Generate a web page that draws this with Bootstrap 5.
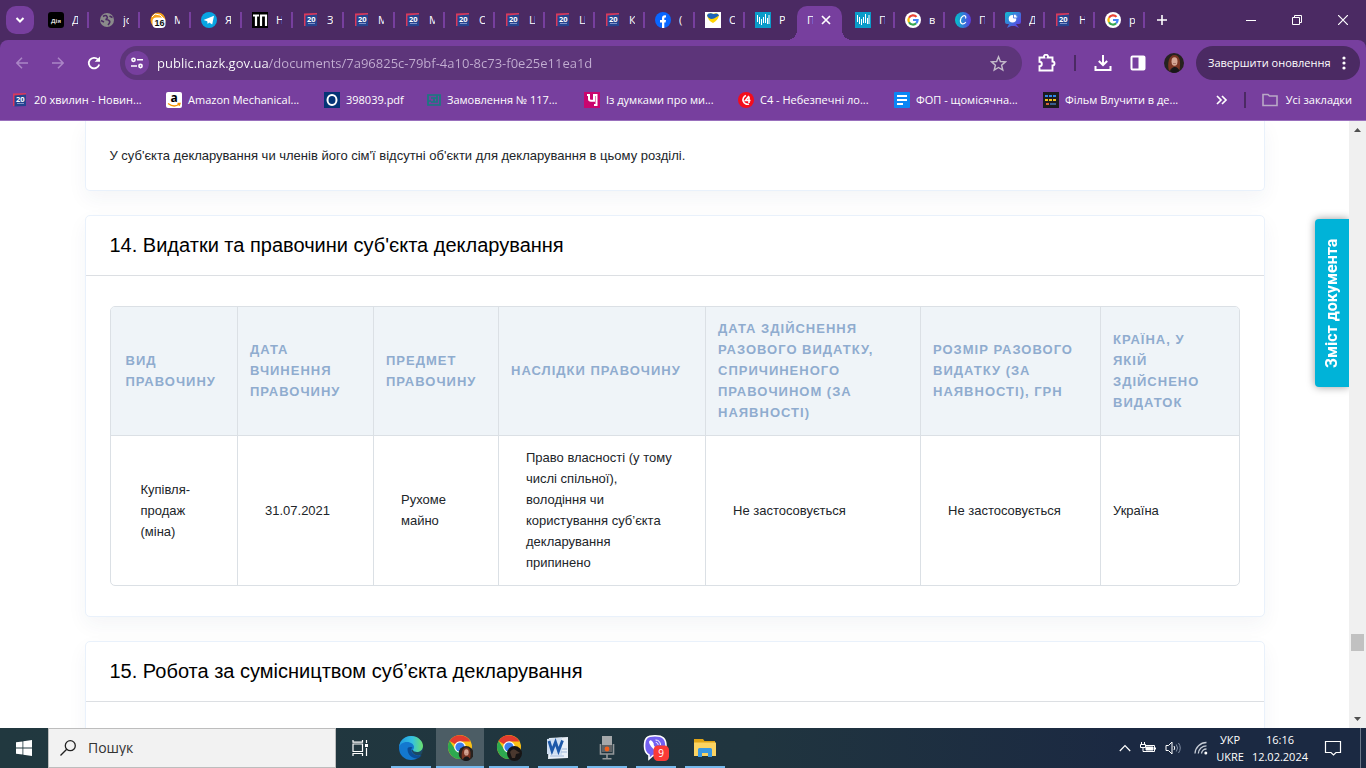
<!DOCTYPE html>
<html lang="uk">
<head>
<meta charset="utf-8">
<meta name="viewport" content="width=device-width, initial-scale=1">
<title>public.nazk.gov.ua</title>
<link rel="stylesheet" href="https://cdn.jsdelivr.net/npm/bootstrap@5.3.0/dist/css/bootstrap.min.css">
<style>
:root{--strip:#4b2a63;--bar:#773f9e;--field:#5d357a;--line:#dbe0e5}
body{font-family:"Liberation Sans",Arial,sans-serif;font-size:13px;line-height:21px;color:#212529}
.chrome-ui,.os-bar{font-family:"Open Sans","Noto Sans",sans-serif;font-size:11px;line-height:16px;color:#fff}
button{border:0;background:none;color:inherit;padding:0;font:inherit}
svg{display:block;flex:none}
/* tab strip */
.tab-strip{background:var(--strip);height:40px}
.tab-search{width:28px;height:28px;margin:0 4px 0 6px;border-radius:10px;background:var(--bar)}
.b-tab{width:50px;height:40px;padding-left:10px;position:relative;color:#fff;text-decoration:none}
.b-tab.wide{width:51px}
.b-tab::after{content:"";width:2px;height:16px;background:var(--bar);position:absolute;right:0;top:12px}
.b-tab.plain::after{display:none}
.b-tab span{width:6px;height:16px;overflow:hidden;white-space:nowrap}
.b-tab.current{padding:6px 3px 0 2px}
.b-tab.current .face{background:var(--bar);height:34px;border-radius:10px 10px 0 0;padding:0 10px 6px;position:relative}
.face::before,.face::after{content:"";position:absolute;bottom:0;width:10px;height:10px}
.face::before{left:-10px;background:radial-gradient(circle at 0 0,transparent 10px,var(--bar) 10px)}
.face::after{right:-10px;background:radial-gradient(circle at 100% 0,transparent 10px,var(--bar) 10px)}
.win-btn{width:46px;height:40px}
/* toolbar */
.tool-wrap{background:var(--strip)}
.tool-area{background:var(--bar);border-radius:8px 8px 0 0;border-bottom:1px solid #9a70bd}
.tool-row{height:46px;padding:0 6px 0 4px}
.tool-row .nav-btn{width:36px;height:34px}
.tool-icons{gap:18px;padding:0 12px 0 16px}
.address{height:34px;border-radius:17px;background:var(--field);padding:0 15px 0 5px;margin-left:8px}
.site-chip{width:24px;height:24px;border-radius:50%;background:var(--bar)}
.address input{border:0;outline:0;padding:0;margin-left:8px;font-size:13px;height:24px;min-width:0;color:transparent;background:linear-gradient(90deg,#fff 112px,#c3aed2 112px);-webkit-background-clip:text;background-clip:text}
.bar-sep{width:2px;height:16px;background:var(--strip)}
.update-btn{height:34px;width:164px;border-radius:17px;background:var(--strip);padding:0 12px}
.marks{height:34px;padding:0 14px 6px 12px}
.marks a{color:#fff;text-decoration:none;white-space:nowrap}
.mark-grid{display:grid;grid-template-columns:154px 158px 103px 157px 154px 156px 149px 1fr}
.mark-grid a{display:flex;align-items:center;gap:6px}
/* document */
.doc-view{overflow:hidden;min-height:0;background:#fff}
.doc-body{max-width:1180px}
.doc-card{border:1px solid #e9f1fb;border-radius:5px;background:#fff;box-shadow:0 8px 20px rgba(40,60,90,.05);margin-bottom:24px}
.doc-card.open-top{border-top:0;border-top-left-radius:0;border-top-right-radius:0}
.doc-card h2{font-size:20px;line-height:24px;color:#000;margin:0;padding:17px 24px 18px;border-bottom:1px solid #dcdfe3;font-weight:400}
.deals-pad{padding:30px 24px}
.deals{border:1px solid var(--line);border-radius:5px;overflow:hidden}
.deals table{table-layout:fixed;width:100%}
.deals th,.deals td{padding:11px 12px 12px;vertical-align:middle;border-left:1px solid var(--line)}
.deals th:first-child,.deals td:first-child{border-left:0;padding-left:15px}
.deals th:last-child{padding-right:24px}
.deals th{background:#eff4f8;color:#8faccf;letter-spacing:1px;text-transform:uppercase;border-bottom:1px solid var(--line)}
.deals td p{margin:0 15px}
.toc-btn{position:absolute;right:0;top:98px;width:34px;height:168px;background:#00b3d8;border-radius:0 4px 4px 0;box-shadow:0 0 8px rgba(0,0,0,.4);color:#fff;font:700 16px/34px Roboto,sans-serif;writing-mode:vertical-rl;transform:rotate(180deg);text-align:center}
.scroll-col{width:17px;background:#f0f0f0}
.scroll-col button{height:17px}
.thumb{height:17px;width:13px;background:#c1c1c1}
/* taskbar */
.os-bar{height:40px;background:linear-gradient(90deg,#21383f,#20353f 55%,#1b2942 82%,#1b2942)}
.os-btn{width:48px;height:40px}
.find-box{width:288px;background:#f2f2f2;border:1px solid #bdbdbd;padding:0 11px}
.find-box input{border:0;outline:0;background:none;font-size:14px;color:#333;padding:0;min-width:0}
.apps{gap:1px;margin-left:3px}
.app-btn{width:48px;height:40px;position:relative}
.app-btn::after{content:"";position:absolute;left:4px;right:4px;bottom:0;height:2px;background:#76b9ed}
.app-btn.active{background:#4c5d65}
.app-btn.active::after{left:0;right:0}
.clock{line-height:17px;text-align:center}
.show-desk{width:6px;height:40px;margin-left:2px;border-left:1px solid #6b7688}
</style>
</head>
<body class="vh-100 d-flex flex-column overflow-hidden">

<svg width="0" height="0" class="position-absolute" aria-hidden="true">
  <symbol id="i20" viewBox="0 0 16 16"><path d="M1 1.500 14 1v3H3v10H1z" fill="#d8395c"/><path d="M2.500 3.500 14 2.500V14l-11.500.500z" fill="#25438f"/><text x="8.300" y="9.500" font-size="7.500" font-weight="700" fill="#fff" text-anchor="middle" font-family="Open Sans">20</text><path d="M5 11.500h7" stroke="#7e93c8"/></symbol>
  <symbol id="inazk" viewBox="0 0 16 16"><path d="M0 0h16v16H0z" fill="#0b9cc9"/><path d="M2.500 3v7M4.500 5v7M6.500 7v6M8.500 5v6M10.500 2v9M12.500 6v6M14 3v9" stroke="#fff"/></symbol>
  <symbol id="igoo" viewBox="0 0 16 16"><circle cx="8" cy="8" r="8" fill="#fff"/><g fill="none" stroke-width="2.200"><path d="M11.500 4.900A4.600 4.600 0 0 0 4 5.700" stroke="#ea4335"/><path d="M4 5.700a4.600 4.600 0 0 0 0 4.600" stroke="#fbbc05"/><path d="M4 10.300a4.600 4.600 0 0 0 7.200.900" stroke="#34a853"/><path d="M11.200 11.200A4.600 4.600 0 0 0 12.600 8H8" stroke="#4285f4"/></g></symbol>
  <symbol id="ichrome" viewBox="0 0 26 26"><circle cx="13" cy="12" r="12" fill="#fbc116"/><path d="M13 12 2.600 6A12 12 0 0 1 23.400 6.500H13z" fill="#e33b2e"/><path d="M2.600 6A12 12 0 0 0 13 24l5-9-5-3-5 2z" fill="#2da94f"/><circle cx="13" cy="12" r="5.800" fill="#fff"/><circle cx="13" cy="12" r="4.600" fill="#3b7ded"/></symbol>
  <symbol id="iface" viewBox="0 0 20 20"><circle cx="10" cy="10" r="10" fill="#26221f"/><path d="M5 18C3 10 5 2 10.500 2S17 9 15.500 17l-3-2H8z" fill="#7a3523"/><ellipse cx="10.500" cy="8.500" rx="3" ry="4.200" fill="#d6a694"/><path d="M7 19c0-4 2-5 4-5s4 2 4 4c-2 2-6 2.500-8 1z" fill="#181719"/><path d="M9 10.500h3" stroke="#8f5549" stroke-width=".6"/></symbol>
</svg>

<header class="chrome-ui flex-shrink-0">
  <div class="tab-strip d-flex align-items-center">
    <button class="tab-search d-flex align-items-center justify-content-center" aria-label="Пошук вкладок"><svg width="10" height="10" viewBox="0 0 10 10"><path d="m1.500 3 3.500 3.500L8.500 3" stroke="#fff" stroke-width="2" fill="none"/></svg></button>
    <nav class="d-flex">
      <a href="#" class="b-tab wide d-flex align-items-center gap-2"><svg width="16" height="16" viewBox="0 0 16 16"><rect width="16" height="16" rx="3"/><text x="8" y="10.500" font-size="6" font-weight="700" fill="#ddd" text-anchor="middle">Дія</text></svg><span>Д</span></a>
      <a href="#" class="b-tab wide d-flex align-items-center gap-2"><svg width="16" height="16" viewBox="0 0 16 16"><circle cx="8" cy="8" r="7" fill="#8b8b8b"/><path d="M4 4.500q3-2 4 0T6.500 7.500q3 0 4 1.500T9 13M10.500 4l3 1.500M2 8.500l3 1.500" stroke="#4b2a63" stroke-width="1.600" fill="none"/></svg><span>jo</span></a>
      <a href="#" class="b-tab wide d-flex align-items-center gap-2"><svg width="16" height="16" viewBox="0 0 16 16"><circle cx="8" cy="8" r="7.500" fill="#f6a21c"/><path d="M2 5 5 2l5 1 4 4" stroke="#fff" fill="none"/><rect x="2.500" y="5.500" width="13" height="10.500" rx="4" fill="#fff"/><text x="9.500" y="14" font-size="9" font-weight="700" fill="#111" text-anchor="middle" font-family="Liberation Sans">16</text></svg><span>М</span></a>
      <a href="#" class="b-tab wide d-flex align-items-center gap-2"><svg width="16" height="16" viewBox="0 0 16 16"><circle cx="8" cy="8" r="8" fill="#08a5e3"/><path d="m2.500 8 10.500-4.200-1.800 8.700-3-2-1.500 1.500-.500-2.800z" fill="#fff"/></svg><span>Я</span></a>
      <a href="#" class="b-tab wide d-flex align-items-center gap-2"><svg width="16" height="16" viewBox="0 0 16 16"><path d="M0 0h16v16H0z"/><path d="M1 3.500h6M4 3v11M9 14V3.500h5V14" stroke="#fff" stroke-width="2.200" fill="none"/></svg><span>Н</span></a>
      <a href="#" class="b-tab wide d-flex align-items-center gap-2"><svg width="16" height="16"><use href="#i20"/></svg><span>З</span></a>
      <a href="#" class="b-tab wide d-flex align-items-center gap-2"><svg width="16" height="16"><use href="#i20"/></svg><span>М</span></a>
      <a href="#" class="b-tab d-flex align-items-center gap-2"><svg width="16" height="16"><use href="#i20"/></svg><span>М</span></a>
      <a href="#" class="b-tab d-flex align-items-center gap-2"><svg width="16" height="16"><use href="#i20"/></svg><span>О</span></a>
      <a href="#" class="b-tab d-flex align-items-center gap-2"><svg width="16" height="16"><use href="#i20"/></svg><span>Ц</span></a>
      <a href="#" class="b-tab d-flex align-items-center gap-2"><svg width="16" height="16"><use href="#i20"/></svg><span>Ц</span></a>
      <a href="#" class="b-tab d-flex align-items-center gap-2"><svg width="16" height="16"><use href="#i20"/></svg><span>К</span></a>
      <a href="#" class="b-tab d-flex align-items-center gap-2"><svg width="16" height="16" viewBox="0 0 16 16"><circle cx="8" cy="8" r="8" fill="#0866ff"/><path d="M7 16v-5.500H5V8h2V6.500C7 4.200 8.300 3 11 3.400v2C9.500 5.300 9.300 5.800 9.300 6.800V8H11l-.400 2.500H9.300V16z" fill="#fff"/></svg><span>(</span></a>
      <a href="#" class="b-tab d-flex align-items-center gap-2"><svg width="16" height="16" viewBox="0 0 16 16"><path d="M0 0h16v16H0z" fill="#fff"/><path d="M2 3q3-3 6-1 4-2 6 1.500-1 4.500-6 7.500-5.500-3-6-8z" fill="#ffd400"/><path d="M2 3.500Q2.500.8 6 1.200 8 2 9 2q4-1.500 5 1.500L9 6.500Q4 8 2 3.500z" fill="#1c62b9"/></svg><span>О</span></a>
      <a href="#" class="b-tab plain d-flex align-items-center gap-2"><svg width="16" height="16"><use href="#inazk"/></svg><span>Р</span></a>
      <div class="b-tab plain current"><div class="face d-flex align-items-center justify-content-between"><span>П</span><button aria-label="Закрити вкладку"><svg width="12" height="12" viewBox="0 0 12 12"><path d="m2 2 8 8m0-8-8 8" stroke="#fff" stroke-width="1.700"/></svg></button></div></div>
      <a href="#" class="b-tab d-flex align-items-center gap-2"><svg width="16" height="16"><use href="#inazk"/></svg><span>П</span></a>
      <a href="#" class="b-tab d-flex align-items-center gap-2"><svg width="16" height="16"><use href="#igoo"/></svg><span>в</span></a>
      <a href="#" class="b-tab d-flex align-items-center gap-2"><svg width="16" height="16" viewBox="0 0 16 16"><linearGradient id="cg"><stop stop-color="#00c4cc"/><stop offset="1" stop-color="#5b3be0"/></linearGradient><circle cx="8" cy="8" r="8" fill="url(#cg)"/><path d="M10.500 6.500c1-2-.500-3.500-2.500-2.500-3 1.500-3.500 7-1 7.800 1.500.400 3-.600 3.800-1.800" stroke="#fff" stroke-width="1.200" fill="none"/></svg><span>П</span></a>
      <a href="#" class="b-tab d-flex align-items-center gap-2"><svg width="16" height="16" viewBox="0 0 16 16"><linearGradient id="pg" x2="1" y2="1"><stop stop-color="#10bfd0"/><stop offset="1" stop-color="#6a2ee8"/></linearGradient><path d="M2 0h12q2 0 2 2v8q0 2-2 2h-3l3 4-4-2H6l-4 2 2-4H2q-2 0-2-2V2q0-2 2-2z" fill="url(#pg)"/><circle cx="7.500" cy="6.800" r="3.800" fill="#fff"/><path d="M8.500 6V2A4 4 0 0 1 12.500 6z" fill="#fff" stroke="#386ee0" stroke-width=".8"/></svg><span>Д</span></a>
      <a href="#" class="b-tab d-flex align-items-center gap-2"><svg width="16" height="16"><use href="#i20"/></svg><span>Н</span></a>
      <a href="#" class="b-tab d-flex align-items-center gap-2"><svg width="16" height="16"><use href="#igoo"/></svg><span>р</span></a>
    </nav>
    <button class="ms-2 ps-1" aria-label="Нова вкладка"><svg width="10" height="10" viewBox="0 0 10 10"><path d="M5 0v10M0 5h10" stroke="#fff" stroke-width="1.600"/></svg></button>
    <div class="d-flex ms-auto">
      <button class="win-btn d-flex align-items-center justify-content-center" aria-label="Згорнути"><svg width="10" height="10"><path d="M0 5.500h10" stroke="#fff"/></svg></button>
      <button class="win-btn d-flex align-items-center justify-content-center" aria-label="Відновити"><svg width="10" height="10" fill="none" stroke="#fff"><path d="M.5 2.500h7v7h-7zM2.500 2.500v-2h7v7h-2"/></svg></button>
      <button class="win-btn d-flex align-items-center justify-content-center" aria-label="Закрити"><svg width="10" height="10"><path d="m0 0 10 10M10 0 0 10" stroke="#fff" stroke-width="1.200"/></svg></button>
    </div>
  </div>

  <div class="tool-wrap"><div class="tool-area">
    <div class="tool-row d-flex align-items-center">
      <button class="nav-btn d-flex align-items-center justify-content-center" aria-label="Назад"><svg width="12" height="12" viewBox="0 0 12 12" fill="none" stroke="#ab86c6" stroke-width="1.500"><path d="M12 6H1M6 .8.900 6 6 11.200"/></svg></button>
      <button class="nav-btn d-flex align-items-center justify-content-center" aria-label="Вперед"><svg width="12" height="12" viewBox="0 0 12 12" fill="none" stroke="#ab86c6" stroke-width="1.500"><path d="M0 6h11M6 .8 11.100 6 6 11.200"/></svg></button>
      <button class="nav-btn d-flex align-items-center justify-content-center" aria-label="Оновити"><svg width="14" height="14" viewBox="0 0 14 14"><path d="M12.200 8.500A5.300 5.300 0 1 1 11 3.500" fill="none" stroke="#fff" stroke-width="1.800"/><path d="M13 .5v5.300H7.700z" fill="#fff"/></svg></button>
      <div class="address flex-grow-1 d-flex align-items-center">
        <button class="site-chip d-flex align-items-center justify-content-center flex-shrink-0" aria-label="Дані про сайт"><svg width="12" height="12" viewBox="0 0 12 12" fill="none" stroke="#fff" stroke-width="1.600"><circle cx="2.500" cy="2.800" r="1.600"/><path d="M6 2.800h6M0 9h6"/><circle cx="9.500" cy="9" r="1.600"/></svg></button>
        <input class="flex-grow-1" aria-label="Адреса" value="public.nazk.gov.ua/documents/7a96825c-79bf-4a10-8c73-f0e25e11ea1d">
        <button aria-label="Додати закладку"><svg width="17" height="17" viewBox="0 0 17 17"><path d="m8.500 1.800 1.900 4.700 5 .400-3.800 3.300 1.200 4.900-4.300-2.600-4.300 2.600 1.200-4.900L1.600 6.900l5-.400z" fill="none" stroke="#c5bccb" stroke-width="1.400"/></svg></button>
      </div>
      <div class="tool-icons d-flex align-items-center">
        <button aria-label="Розширення"><svg width="18" height="18" viewBox="0 0 18 18"><path d="M1.500 3.500h4.700a2 2 0 1 1 3.600 0h4.700v4a2 2 0 1 1 0 4v5h-13v-4.200a2.300 2.300 0 0 0 0-4.600z" fill="none" stroke="#fff" stroke-width="1.900"/></svg></button>
        <div class="bar-sep"></div>
        <button aria-label="Завантаження"><svg width="18" height="18" viewBox="0 0 18 18"><path d="M9 1v9.500M4.800 7 9 11l4.200-4M1.500 12v4h15v-4" fill="none" stroke="#fff" stroke-width="2"/></svg></button>
        <button aria-label="Бічна панель"><svg width="16" height="16" viewBox="0 0 16 16"><rect x="1.500" y="1.500" width="13" height="13" rx="1" fill="none" stroke="#fff" stroke-width="2"/><path d="M8.500 1h6v14h-6z" fill="#fff"/></svg></button>
        <button aria-label="Профіль"><svg width="20" height="20"><use href="#iface"/></svg></button>
      </div>
      <button class="update-btn d-flex align-items-center justify-content-between text-nowrap"><span>Завершити оновлення</span><svg width="8" height="16" fill="#fff"><circle cx="4" cy="3" r="1.600"/><circle cx="4" cy="8" r="1.600"/><circle cx="4" cy="13" r="1.600"/></svg></button>
    </div>
    <div class="marks d-flex align-items-center">
      <div class="mark-grid flex-grow-1">
        <a href="#"><svg width="16" height="16"><use href="#i20"/></svg>20 хвилин - Новин...</a>
        <a href="#"><svg width="16" height="16" viewBox="0 0 16 16"><rect width="16" height="16" rx="2" fill="#fff"/><text x="8" y="10" font-size="12" font-weight="700" text-anchor="middle" font-family="Open Sans">a</text><path d="M2 11.500q6 4.500 11 .800M11.500 11.500h2.500l-.800 2.300" stroke="#f79400" stroke-width="1.300" fill="none"/></svg>Amazon Mechanical...</a>
        <a href="#"><svg width="16" height="16" viewBox="0 0 16 16"><path d="M0 0h16v16H0z" fill="#053576"/><ellipse cx="8" cy="8" rx="4.500" ry="5" fill="none" stroke="#fff" stroke-width="2"/></svg>398039.pdf</a>
        <a href="#"><svg width="14" height="16" viewBox="0 0 14 16"><path d="M1 3h12v10H1zM4 6h6v4H4M7 6v4M1 9h3M10 3v4" fill="none" stroke="#177b80" stroke-width="1.700"/></svg>Замовлення № 117...</a>
        <a href="#"><svg width="16" height="16" viewBox="0 0 16 16"><path d="M0 0h16v16H0z" fill="#c9056f"/><path d="M3 3h2v4q0 1.800 2 1.800h3V3h2.500v10H10" fill="none" stroke="#fff" stroke-width="2"/></svg>Із думками про ми...</a>
        <a href="#"><svg width="16" height="16" viewBox="0 0 16 16"><circle cx="8" cy="8" r="8" fill="#f40c1c"/><path d="M8 3.500A4.500 4.500 0 1 0 11 12M11 4 7.500 8.500h5M11 5v6" stroke="#fff" stroke-width="1.600" fill="none"/></svg>С4 - Небезпечні ло...</a>
        <a href="#"><svg width="16" height="16" viewBox="0 0 16 16"><rect width="16" height="16" rx="1" fill="#0b86f5"/><path d="M3 4h10M3 8h10M3 12h6" stroke="#fff" stroke-width="2"/></svg>ФОП - щомісячна...</a>
        <a href="#"><svg width="16" height="16" viewBox="0 0 16 16"><rect width="16" height="16" fill="#1c1b20"/><path d="M2 4h12" stroke="#2f87e6" stroke-width="2" stroke-dasharray="3 1"/><path d="M2 8h12" stroke="#f1c21d" stroke-width="2" stroke-dasharray="3 1"/><path d="M3 12h3" stroke="#d8643a" stroke-width="2"/><path d="M7 12h6" stroke="#3a5c8c" stroke-width="2"/></svg>Фільм Влучити в де...</a>
      </div>
      <button class="me-3" aria-label="Інші закладки"><svg width="12" height="10" viewBox="0 0 12 10"><path d="m1 1 4 4-4 4M6 1l4 4-4 4" fill="none" stroke="#fff" stroke-width="1.700"/></svg></button>
      <div class="bar-sep me-3"></div>
      <a href="#" class="d-flex align-items-center gap-2"><svg width="16" height="14" viewBox="0 0 16 14"><path d="M1 1.500h5L7.500 3H15v9.500H1z" fill="none" stroke="#b9a9c6" stroke-width="1.600"/></svg>Усі закладки</a>
    </div>
  </div></div>
</header>

<div class="flex-grow-1 d-flex doc-view">
  <main class="flex-grow-1 position-relative overflow-hidden">
    <div class="doc-body mx-auto">
      <section class="doc-card open-top p-4"><p class="m-0">У суб'єкта декларування чи членів його сім'ї відсутні об'єкти для декларування в цьому розділі.</p></section>
      <section class="doc-card">
        <h2>14. Видатки та правочини суб'єкта декларування</h2>
        <div class="deals-pad">
          <div class="deals">
            <table>
              <colgroup><col style="width:127px"><col style="width:136px"><col style="width:125px"><col style="width:207px"><col style="width:215px"><col style="width:180px"><col style="width:138px"></colgroup>
              <thead><tr><th>Вид правочину</th><th>Дата вчинення правочину</th><th>Предмет правочину</th><th>Наслідки правочину</th><th>Дата здійснення разового видатку, спричиненого правочином (за наявності)</th><th>Розмір разового видатку (за наявності), грн</th><th>Країна, у якій здійснено видаток</th></tr></thead>
              <tbody><tr><td><p>Купівля-продаж (міна)</p></td><td><p>31.07.2021</p></td><td><p>Рухоме майно</p></td><td><p>Право власності (у тому числі спільної), володіння чи користування суб’єкта декларування припинено</p></td><td><p>Не застосовується</p></td><td><p>Не застосовується</p></td><td>Україна</td></tr></tbody>
            </table>
          </div>
        </div>
      </section>
      <section class="doc-card"><h2>15. Робота за сумісництвом суб’єкта декларування</h2><div class="p-5"></div></section>
    </div>
    <button class="toc-btn">Зміст документа</button>
  </main>
  <div class="scroll-col d-flex flex-column align-items-center flex-shrink-0">
    <button aria-label="Вгору"><svg width="17" height="17"><path d="M5 11h7L8.500 7z" fill="#505050"/></svg></button>
    <div style="flex-grow:496"></div><div class="thumb"></div><div style="flex-grow:60"></div>
    <button aria-label="Вниз"><svg width="17" height="17"><path d="M5 6h7l-3.500 4z" fill="#505050"/></svg></button>
  </div>
</div>

<footer class="os-bar d-flex flex-shrink-0">
  <button class="os-btn d-flex align-items-center justify-content-center" aria-label="Пуск"><svg width="16" height="16" viewBox="0 0 16 16" fill="#fff"><path d="M0 2.300 6.500 1.400v6.200H0zM7.300 1.200 16 0v7.600H7.300zM0 8.400h6.500v6.200L0 13.700zM7.300 8.400H16V16l-8.700-1.200z"/></svg></button>
  <label class="find-box d-flex align-items-center"><svg width="16" height="16" viewBox="0 0 16 16" fill="none" stroke="#222" stroke-width="1.300"><circle cx="10.300" cy="5.700" r="5"/><path d="M6.700 9.300.500 15.500"/></svg><input class="ms-2 ps-1 flex-grow-1" aria-label="Пошук" value="Пошук"></label>
  <button class="os-btn d-flex align-items-center justify-content-center" aria-label="Перегляд завдань"><svg width="17" height="16" viewBox="0 0 17 16" fill="none" stroke="#fff" stroke-width="1.200"><path d="M1 4h9.500v7.500H1zM1 0v2.200h9.500V0M1 16v-2.500h9.500V16M14.500 0v3M14.500 8v8"/><path d="M13 4h3v3h-3z" fill="#fff" stroke="none"/></svg></button>
  <div class="apps d-flex">
    <button class="app-btn d-flex align-items-center justify-content-center" aria-label="Edge"><svg width="24" height="24" viewBox="0 0 24 24"><linearGradient id="eg"><stop stop-color="#1f9ae0"/><stop offset=".55" stop-color="#35c1e0"/><stop offset="1" stop-color="#6be06a"/></linearGradient><circle cx="12" cy="12" r="12" fill="#1378cf"/><path d="M0 11C1 4 6 0 12 0c7 0 12 5 12 10 0 4-3 6-6 6-2.500 0-4-1-4-2 0-.800 1-1 1-3 0-2.500-3-5-7-5-4.500 0-7 2.500-8 5z" fill="url(#eg)"/><path d="M8.500 13c0 6 5 9.500 9 9.500 2 0 4-1.500 5-3.500-4 1.500-8 0-9.500-2.500-1-1.700-1-4 .500-5-3-1-5 0-5 1.500z" fill="#0c4d96"/><path d="M14 14c0 1 1.500 2 4 2 3 0 6-2 6-6v8l-2.500 1.300C17 20 13 18 12.500 14z" fill="#21383f" opacity=".75"/></svg></button>
    <button class="app-btn active d-flex align-items-center justify-content-center" aria-label="Chrome"><svg width="26" height="26" viewBox="0 0 26 26"><use href="#ichrome" width="26" height="26"/><svg x="11.500" y="11" width="15" height="15" viewBox="0 0 20 20"><use href="#iface" width="20" height="20"/></svg></svg></button>
    <button class="app-btn d-flex align-items-center justify-content-center" aria-label="Chrome, другий профіль"><svg width="26" height="26" viewBox="0 0 26 26"><use href="#ichrome" width="26" height="26"/><circle cx="18.500" cy="18.500" r="7.500" fill="#171515"/><path d="M14 17q3-5 7-1l3 2-4 1-1 4h-3z" fill="#4a382e"/></svg></button>
    <button class="app-btn d-flex align-items-center justify-content-center" aria-label="Word"><svg width="22" height="22" viewBox="0 0 22 22"><path d="M2 1 21 0v21L1 22z" fill="#e9f0f8"/><path d="M0 2 15 .500V18L0 17z" fill="#cfdff2"/><path d="m2 4 3 10L8.500 5l3 9 4-10.500" fill="none" stroke="#1c58a8" stroke-width="2.800"/><path d="M15 12h5M14 15h6M3 19h14" stroke="#9fb7d8"/></svg></button>
    <button class="app-btn d-flex align-items-center justify-content-center" aria-label="Запис звуку"><svg width="16" height="24" viewBox="0 0 16 24"><path d="M3 0h10v9H3z" fill="#a5a8aa"/><path d="M3 9h10v7H3z" fill="#5f6366"/><path d="M1.500 8v10h13V8M8 18v4M3.500 22.800h9" fill="none" stroke="#94989a" stroke-width="1.600"/><circle cx="8" cy="13" r="2.400" fill="#f2601d"/></svg></button>
    <button class="app-btn d-flex align-items-center justify-content-center" aria-label="Viber"><svg width="26" height="26" viewBox="0 0 26 26"><path d="M12 .800C4 .800 1.500 3 1.500 11c0 5 1.500 7.500 4.500 9v4l4-3.500c10 .500 13-2 13-9.500S20 .800 12 .800z" fill="#7360f2" stroke="#fff" stroke-width="1.600"/><path d="M7 5.500c-2 1-.500 4 2 7s5.500 5 7 4c2-1.500 1.500-2.500-.800-3.700-1.500 1.700-5.200-2.300-4.400-4C9 5.500 8 5 7 5.500z" fill="#fff"/><path d="M12.500 5c3 0 5 2 5 5M12.800 7.500c1.500 0 2.200 1 2.300 2.300" fill="none" stroke="#fff"/><rect x="10.500" y="10.500" width="15.500" height="15.500" rx="4.500" fill="#fb3a36"/><text x="18.200" y="22" font-size="10" fill="#fff" text-anchor="middle">9</text></svg></button>
    <button class="app-btn d-flex align-items-center justify-content-center" aria-label="Провідник"><svg width="22" height="20" viewBox="0 0 22 20"><path d="M0 1h9l1.500 2H21v4H0z" fill="#e0a416"/><path d="M0 4.500h22V18H0z" fill="#fcd462"/><path d="M4 19v-7.500Q4 10 5.500 10h11q1.500 0 1.500 1.500V19h-4v-4H8v4z" fill="#3a98e2"/></svg></button>
  </div>
  <div class="d-flex align-items-center ms-auto">
    <svg class="me-2" width="12" height="12"><path d="m.8 9 5.200-5.500L11.200 9" fill="none" stroke="#fff" stroke-width="1.200"/></svg>
    <svg width="18" height="14" viewBox="0 0 18 14" fill="none" stroke="#fff"><path d="M6 4.500h9.500v6H4v-4M16.500 6.500v2"/><path d="M7 6h7v3H7z" fill="#fff"/><path d="M2.500 1v2M5.500 1v2M1.500 3.500h5v3h-5z"/></svg>
    <svg class="mx-2" width="17" height="16" viewBox="0 0 17 16" fill="none" stroke="#fff"><path d="M1 5.500h2.500L7 2v12l-3.500-3.500H1zM9 6q1.500 2 0 4"/><path d="M11.300 4.500q2.500 3.500 0 7M13.500 3q3.500 5 0 10" stroke="#8490a5"/></svg>
    <svg class="ms-1" width="14" height="14" viewBox="0 0 14 14" fill="none"><path d="M1 12.500A11.500 11.500 0 0 1 12.500 1.500M4.300 12.500a8.200 8.200 0 0 1 8.200-7.700M7.500 12.500a5 5 0 0 1 5-4.500" stroke="#c6ccd6" stroke-width="1.300"/><circle cx="11.800" cy="12" r="1.500" fill="#fff"/></svg>
    <div class="clock ms-2">УКР<br>UKRE</div>
    <div class="clock ms-2">16:16<br>12.02.2024</div>
    <button class="mx-3" aria-label="Сповіщення"><svg width="18" height="18" viewBox="0 0 18 18"><path d="M1.500 2.500h15v11H12L9.500 16 7 13.500H1.500z" fill="none" stroke="#fff" stroke-width="1.200"/></svg></button>
    <div class="show-desk"></div>
  </div>
</footer>
<script src="https://cdn.jsdelivr.net/npm/bootstrap@5.3.0/dist/js/bootstrap.bundle.min.js"></script>
</body>
</html>
